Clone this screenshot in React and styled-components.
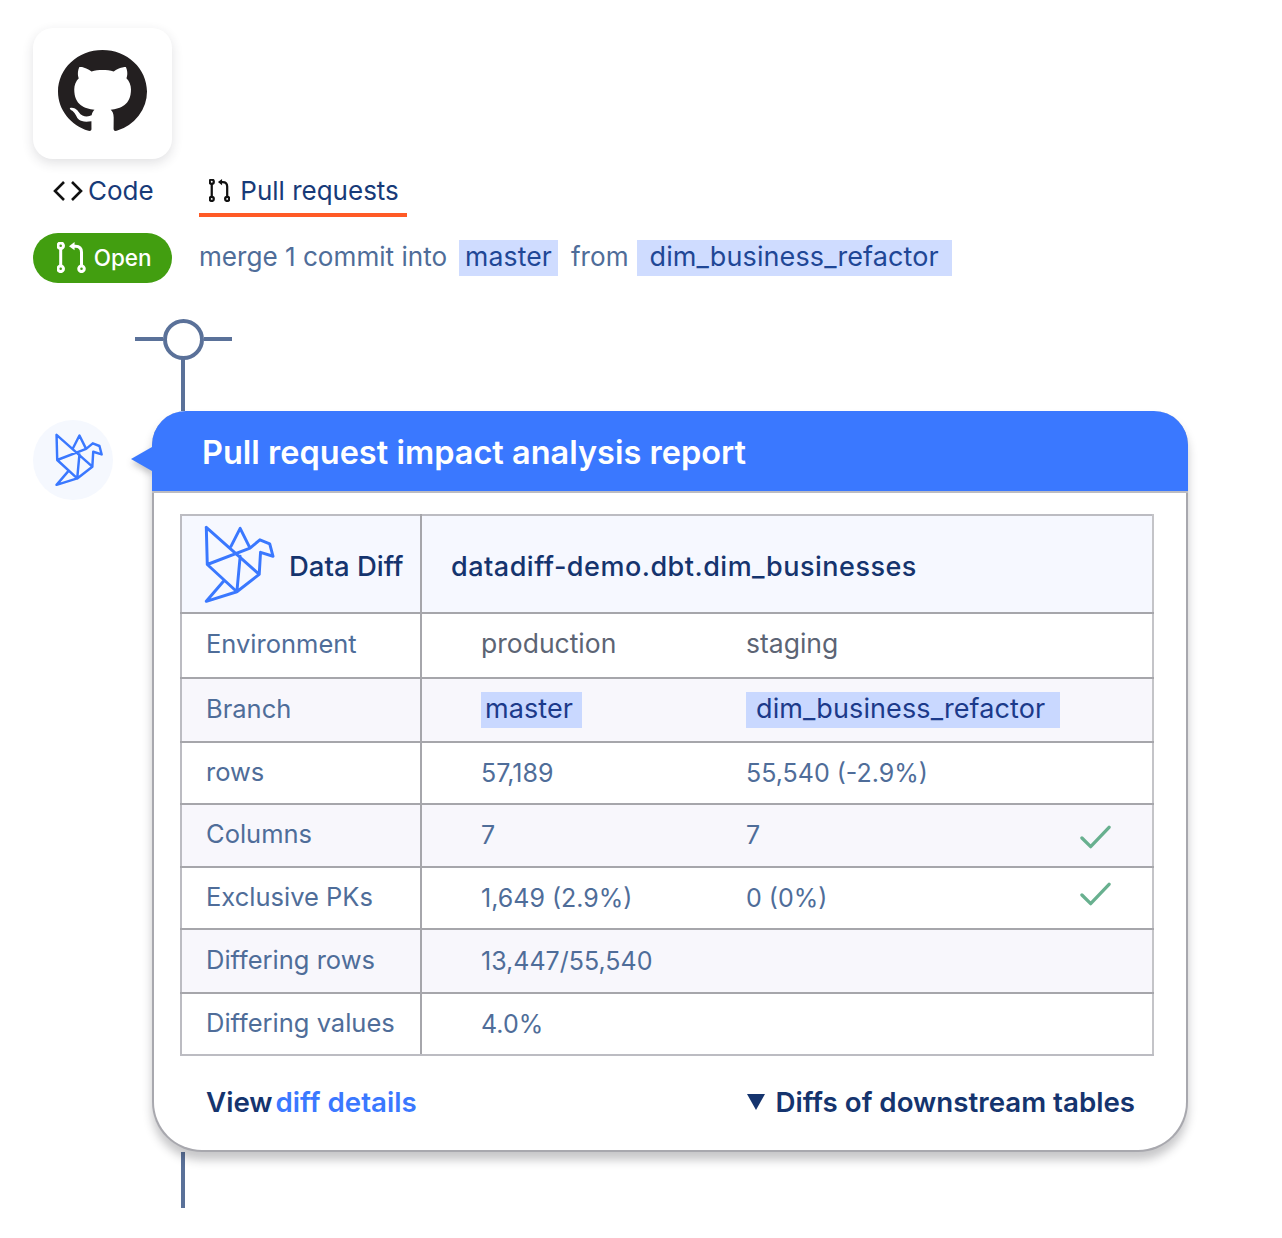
import React from "react";
import styled, { createGlobalStyle } from "styled-components";

const GlobalStyle = createGlobalStyle`
  html, body {
    margin: 0;
    padding: 0;
    background: #ffffff;
  }
  body {
    font-family: "Inter", "Noto Sans", sans-serif;
  }
`;

const rows = [
  { label: "Environment", a: "production", b: "staging", height: 65, muted: true },
  { label: "Branch", a: "master", b: "dim_business_refactor", height: 64, striped: true, chips: true },
  { label: "rows", a: "57,189", b: "55,540 (-2.9%)", height: 62 },
  { label: "Columns", a: "7", b: "7", height: 63, striped: true, ok: true },
  { label: "Exclusive PKs", a: "1,649 (2.9%)", b: "0 (0%)", height: 62, ok: true, lift: true },
  { label: "Differing rows", a: "13,447/55,540", b: "", height: 64, striped: true },
  { label: "Differing values", a: "4.0%", b: "", height: 62 },
];

const GithubMark = () => (
  <svg width="89" height="83" viewBox="0 0 16 16" preserveAspectRatio="none" fill="#231f20">
    <path d="M8 0C3.58 0 0 3.58 0 8c0 3.54 2.29 6.53 5.47 7.59.4.07.55-.17.55-.38 0-.19-.01-.82-.01-1.49-2.01.37-2.53-.49-2.69-.94-.09-.23-.48-.94-.82-1.13-.28-.15-.68-.52-.01-.53.63-.01 1.08.58 1.23.82.72 1.21 1.87.87 2.33.66.07-.52.28-.87.51-1.07-1.78-.2-3.64-.89-3.64-3.95 0-.87.31-1.59.82-2.15-.08-.2-.36-1.02.08-2.12 0 0 .67-.21 2.2.82.64-.18 1.32-.27 2-.27.68 0 1.36.09 2 .27 1.53-1.04 2.2-.82 2.2-.82.44 1.1.16 1.92.08 2.12.51.56.82 1.27.82 2.15 0 3.07-1.87 3.75-3.65 3.95.29.25.54.73.54 1.48 0 1.07-.01 1.93-.01 2.2 0 .21.15.46.55.38A8.013 8.013 0 0016 8c0-4.42-3.58-8-8-8z" />
  </svg>
);

const CodeIcon = () => (
  <svg width="30" height="22" viewBox="0 0 30 22" fill="none" stroke="#111" strokeWidth="2.6">
    <path d="M11 2 2 11l9 9M19 2l9 9-9 9" />
  </svg>
);

const PullIcon = ({ size, color }) => (
  <svg width={(size * 62) / 67} height={size} viewBox="0 0 62 67" fill="none" stroke={color} strokeWidth="6.5">
    <circle cx="8" cy="8" r="6" />
    <circle cx="8" cy="58" r="6" />
    <circle cx="53" cy="58" r="6" />
    <path d="M8 14v38M53 52V22q0-13-13-13h-4" />
    <path d="M38 0 26 9l12 9z" fill={color} stroke="none" />
  </svg>
);

const BirdIcon = ({ width, height, weight }) => (
  <svg width={width} height={height} viewBox="0 0 216 240" fill="none" stroke="#3a78ff" strokeWidth={weight} strokeLinejoin="round" strokeLinecap="round">
    <path d="M7 7 10 120 100 203 168 150 172 83 210 95 200 57 170 45 140 70 110 10 82 65 M7 7 168 150 M10 120 140 70 M110 95 100 203 M60 170 7 232 100 203" />
  </svg>
);

const CheckIcon = () => (
  <svg width="31" height="26" viewBox="0 0 32 26" fill="none" stroke="#68b08f" strokeWidth="3.4" strokeLinecap="round" strokeLinejoin="round">
    <path d="M2 14l9 9L30 3" />
  </svg>
);

export default function App() {
  return (
    <Page>
      <GlobalStyle />
      <LogoCard>
        <GithubMark />
      </LogoCard>

      <Tabs>
        <Tab>
          <CodeIcon />
          Code
        </Tab>
        <Tab $active>
          <PullIcon size={23} color="#111" />
          Pull requests
        </Tab>
      </Tabs>

      <StatusRow>
        <OpenPill>
          <PullIcon size={31} color="#fff" />
          Open
        </OpenPill>
        <MergeText>merge 1 commit into</MergeText>
        <Chip>master</Chip>
        <MergeText $tight>from</MergeText>
        <Chip $wide>dim_business_refactor</Chip>
      </StatusRow>

      <NodeRow>
        <Dash />
        <Ring />
        <Dash />
      </NodeRow>
      <Stem $height={52} />

      <ReportRow>
        <Avatar>
          <BirdIcon width={48} height={56} weight={11} />
        </Avatar>
        <Card>
          <Tail />
          <CardHeader>Pull request impact analysis report</CardHeader>
          <CardBody>
            <Table>
              <colgroup>
                <col width="240" />
                <col width="325" />
                <col width="320" />
                <col width="87" />
              </colgroup>
              <tbody>
                <HeadRow>
                  <BrandLabelCell>
                    <BrandCell>
                      <BirdIcon width={71} height={79} weight={9} />
                      <BrandName>Data Diff</BrandName>
                    </BrandCell>
                  </BrandLabelCell>
                  <TitleCell colSpan={3}>datadiff-demo.dbt.dim_businesses</TitleCell>
                </HeadRow>
                {rows.map((row) => (
                  <Row key={row.label} $height={row.height} $striped={row.striped}>
                    <LabelCell>{row.label}</LabelCell>
                    <ValueCell $first $muted={row.muted}>
                      {row.chips ? <TableChip>{row.a}</TableChip> : row.a}
                    </ValueCell>
                    <ValueCell $muted={row.muted}>
                      {row.chips ? <TableChip $wide>{row.b}</TableChip> : row.b}
                    </ValueCell>
                    <CheckCell $lift={row.lift}>{row.ok && <CheckIcon />}</CheckCell>
                  </Row>
                ))}
              </tbody>
            </Table>
            <CardFooter>
              <FooterText>
                View <FooterLink>diff details</FooterLink>
              </FooterText>
              <FooterText $wide>
                <Caret />
                Diffs of downstream tables
              </FooterText>
            </CardFooter>
          </CardBody>
        </Card>
      </ReportRow>
      <Stem $height={56} />
    </Page>
  );
}

const Page = styled.div`
  box-sizing: border-box;
  width: 1282px;
  height: 1238px;
  padding: 28px 0 0 33px;
  overflow: hidden;
  background: #ffffff;
`;

const LogoCard = styled.div`
  width: 139px;
  height: 131px;
  display: flex;
  justify-content: center;
  padding-top: 22px;
  box-sizing: border-box;
  border-radius: 20px;
  background: #fff;
  box-shadow: 0 4px 12px rgba(40, 40, 60, 0.14);
`;

const Tabs = styled.div`
  display: flex;
  margin-top: 13px;
  height: 45px;
`;

const Tab = styled.div`
  box-sizing: border-box;
  display: flex;
  align-items: center;
  gap: ${(p) => (p.$active ? "10px" : "5px")};
  width: ${(p) => (p.$active ? "208px" : "166px")};
  height: 45px;
  padding: 0 0 4px ${(p) => (p.$active ? "10px" : "20px")};
  border-bottom: 4px solid ${(p) => (p.$active ? "#ff5a26" : "transparent")};
  font-size: 26px;
  color: #173a78;
`;

const StatusRow = styled.div`
  display: flex;
  align-items: center;
  margin-top: 16px;
  height: 50px;
`;

const OpenPill = styled.div`
  box-sizing: border-box;
  display: flex;
  align-items: center;
  gap: 8px;
  width: 139px;
  height: 50px;
  padding: 0 0 2px 24px;
  margin-right: 27px;
  border-radius: 25px;
  background: #429e10;
  color: #fff;
  font-size: 22.5px;
  font-weight: 500;
`;

const MergeText = styled.span`
  padding-bottom: 4px;
  font-size: 26.1px;
  color: #4f6d99;
  margin-right: ${(p) => (p.$tight ? "8px" : "12px")};
`;

const Chip = styled.span`
  box-sizing: border-box;
  display: inline-flex;
  align-items: center;
  height: 36px;
  padding: 0 ${(p) => (p.$wide ? "13px" : "6px")} 4px;
  margin-right: 13px;
  background: #cfdcff;
  font-size: ${(p) => (p.$wide ? "27px" : "26.6px")};
  letter-spacing: 0.1px;
  color: #1f4796;
  white-space: nowrap;
`;

const NodeRow = styled.div`
  display: flex;
  align-items: center;
  width: 97px;
  height: 40px;
  margin: 36px 0 0 102px;
`;

const Dash = styled.div`
  flex: 1;
  height: 4px;
  background: #5a7199;
`;

const Ring = styled.div`
  box-sizing: border-box;
  width: 41px;
  height: 41px;
  border: 4px solid #5a7199;
  border-radius: 50%;
`;

const Stem = styled.div`
  width: 4px;
  height: ${(p) => p.$height}px;
  margin-left: 148px;
  background: #5a7199;
`;

const ReportRow = styled.div`
  display: flex;
  align-items: flex-start;
  gap: 39px;
`;

const Avatar = styled.div`
  box-sizing: border-box;
  width: 80px;
  height: 80px;
  margin-top: 9px;
  padding-left: 12px;
  display: flex;
  align-items: center;
  justify-content: center;
  border-radius: 50%;
  background: #f5f8fe;
`;

const Card = styled.div`
  position: relative;
  z-index: 1;
  box-sizing: border-box;
  width: 1036px;
  height: 741px;
  border: 2px solid #a8a8ae;
  border-top: none;
  border-radius: 34px 34px 50px 50px;
  background: #fff;
  box-shadow: 0 8px 10px rgba(30, 30, 40, 0.25);
`;

const Tail = styled.div`
  position: absolute;
  left: -23px;
  top: 36px;
  width: 0;
  height: 0;
  border-top: 12px solid transparent;
  border-bottom: 12px solid transparent;
  border-right: 21px solid #3a78ff;
  filter: drop-shadow(0 4px 3px rgba(30, 30, 40, 0.25));
`;

const CardHeader = styled.div`
  position: relative;
  box-sizing: border-box;
  display: flex;
  align-items: center;
  height: 82px;
  margin: 0 -2px;
  padding: 3px 0 0 50px;
  border-radius: 34px 34px 0 0;
  border-bottom: 2px solid #bcbcc2;
  background: #3a78ff;
  color: #fff;
  font-size: 32.5px;
  font-weight: 600;
`;

const CardBody = styled.div`
  padding: 21px 0 0 26px;
`;

const Table = styled.table`
  table-layout: fixed;
  width: 972px;
  border-collapse: collapse;
  font-size: 25px;
`;

const HeadRow = styled.tr`
  height: 98px;
  background: #f6f8ff;
`;

const Row = styled.tr`
  height: ${(p) => p.$height}px;
  background: ${(p) => (p.$striped ? "#f8f7fc" : "#fff")};
`;

const Cell = styled.td`
  box-sizing: border-box;
  padding: 0 0 4px;
  border-top: 2px solid #a6a6ab;
  border-bottom: 2px solid #a6a6ab;
  white-space: nowrap;
  tr:first-child > & {
    border-top: 2px solid #bcbcc2;
  }
  tr:last-child > & {
    border-bottom: 2px solid #bcbcc2;
  }
  &:last-child {
    border-right: 2px solid #c4c4c8;
  }
`;

const LabelCell = styled(Cell)`
  padding-left: 24px;
  border-left: 2px solid #bcbcc2;
  border-right: 2px solid #a6a6ab;
  font-size: 25.5px;
  color: #4f6d99;
`;

const BrandLabelCell = styled(LabelCell)`
  padding-bottom: 0;
`;

const BrandCell = styled.div`
  display: flex;
  align-items: center;
  gap: 14px;
  margin-left: -2px;
`;

const BrandName = styled.span`
  padding-top: 4px;
  font-size: 27.5px;
  color: #15346e;
  font-weight: 500;
`;

const TitleCell = styled(Cell)`
  padding: 5px 0 0 29px;
  font-size: 27px;
  letter-spacing: 0.5px;
  color: #15346e;
  font-weight: 500;
`;

const ValueCell = styled(Cell)`
  padding-left: ${(p) => (p.$first ? "59px" : "0")};
  padding-bottom: ${(p) => (p.$muted ? "5px" : "1px")};
  font-size: ${(p) => (p.$muted ? "26.5px" : "25px")};
  color: ${(p) => (p.$muted ? "#5c6474" : "#4f6d99")};
`;

const CheckCell = styled(Cell)`
  padding: ${(p) => (p.$lift ? "0 0 2px 14px" : "8px 0 0 14px")};
  vertical-align: middle;
`;

const TableChip = styled.span`
  box-sizing: border-box;
  display: inline-flex;
  align-items: center;
  height: 36px;
  padding: ${(p) => (p.$wide ? "0 15px 3px 10px" : "0 9px 3px 4px")};
  background: #c9d8ff;
  font-size: 27px;
  letter-spacing: 0.1px;
  color: #1c3a8a;
`;

const CardFooter = styled.div`
  display: flex;
  align-items: center;
  justify-content: space-between;
  height: 91px;
  padding: 0 51px 0 26px;
`;

const FooterText = styled.div`
  display: flex;
  align-items: center;
  gap: ${(p) => (p.$wide ? "11px" : "3px")};
  font-size: 27.7px;
  font-weight: 600;
  color: #15346e;
`;

const FooterLink = styled.span`
  color: #3a78ff;
`;

const Caret = styled.span`
  width: 0;
  height: 0;
  border-left: 9px solid transparent;
  border-right: 9px solid transparent;
  border-top: 16px solid #15346e;
`;
